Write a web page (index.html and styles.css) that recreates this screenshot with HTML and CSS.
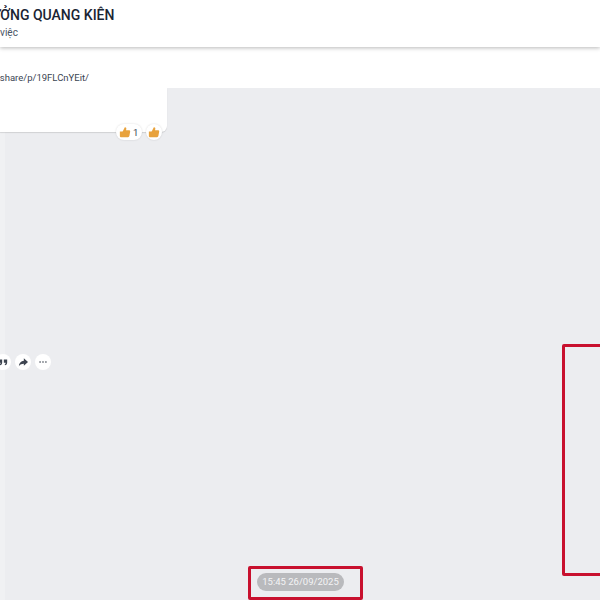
FILE: index.html
```html
<html>
    <head>
        <title>Chat</title>
        <link rel="stylesheet" href="styles.css">
    </head>
    <body>
        <div class="header">
            <div class="name">TRƯỞNG QUANG KIÊN</div>
            <div class="status">Làm việc</div>
        </div>
        <div class="linkbar">
            <div class="linktext">https://www.facebook.com/share/p/19FLCnYEit/</div>
        </div>
        <div class="chat">
            <div class="bubble">
                <div class="reacts">
                    <div class="react react1">
                        <svg class="thumb" viewBox="0 0 14 14"><path fill="#e8a23c" d="M1 6.500h2.500c.5 0 .8-.2 1.100-.6L6.800 1.500c1.300-.2 2 .8 1.700 2.100L8.200 5h3.400c1.100 0 1.700.8 1.400 1.800l-.9 5c-.2.8-.8 1.200-1.500 1.200H2c-.7 0-1-.4-1-1z"/></svg>
                        <span class="count">1</span>
                    </div>
                    <div class="react react2">
                        <svg class="thumb" viewBox="0 0 14 14"><path fill="#e8a23c" d="M1 6.500h2.500c.5 0 .8-.2 1.100-.6L6.800 1.500c1.300-.2 2 .8 1.700 2.100L8.200 5h3.400c1.100 0 1.700.8 1.400 1.800l-.9 5c-.2.8-.8 1.200-1.500 1.200H2c-.7 0-1-.4-1-1z"/></svg>
                    </div>
                </div>
            </div>
            <div class="actions">
                <div class="action action-quote">
                    <svg class="icon" viewBox="0 0 12 12"><path fill="#3d4450" d="M1 3h4v3.500C5 8.400 4 9.600 2.400 10L2 9c.8-.4 1.200-1 1.200-2H1zM7 3h4v3.500c0 1.900-1 3.100-2.600 3.500L8 9c.8-.4 1.200-1 1.200-2H7z"/></svg>
                </div>
                <div class="action">
                    <svg class="icon" viewBox="0 0 12 12"><path fill="#3d4450" d="M7 1.500 12 6 7 10.500V8C4.500 8 2.500 8.800 1 11c.3-3.600 2.500-6 6-6.500z"/></svg>
                </div>
                <div class="action">
                    <svg class="icon" viewBox="0 0 12 12"><circle cx="2.500" cy="6" r="1" fill="#3d4450"/><circle cx="6" cy="6" r="1" fill="#3d4450"/><circle cx="9.500" cy="6" r="1" fill="#3d4450"/></svg>
                </div>
            </div>
            <div class="time">15:45 26/09/2025</div>
            <div class="mark mark-time"></div>
            <div class="mark mark-side"></div>
        </div>
    </body>
</html>
```

FILE: styles.css
```css
html, body {
    margin: 0;
    height: 600px;
    overflow: hidden;
}
body {
    display: flex;
    flex-direction: column;
    width: 600px;
    background-color: #fff;
    font-family: Roboto, "Liberation Sans", sans-serif;
    color: #1a2433;
}
.header {
    height: 47px;
    box-sizing: border-box;
    padding-top: 5px;
    background-color: #fff;
    box-shadow: 0 1px 4px rgba(0, 0, 0, 0.28);
    position: relative;
    overflow: hidden;
}
.name {
    margin-left: -27px;
    font-size: 14px;
    font-weight: 500;
    line-height: 20px;
    white-space: nowrap;
}
.status {
    margin-left: -22px;
    margin-top: 1px;
    font-size: 10px;
    line-height: 14px;
    color: #4a5565;
    white-space: nowrap;
}
.linkbar {
    height: 41px;
    flex-shrink: 0;
    overflow: hidden;
}
.linktext {
    margin-top: 24px;
    margin-left: -119px;
    font-size: 9.500px;
    line-height: 14px;
    color: #3a4452;
    white-space: nowrap;
}
.chat {
    flex: 1;
    position: relative;
    background-color: #ecedf0;
    background-image: linear-gradient(to right, #f0f1f3 5px, transparent 5px);
    overflow: hidden;
}
.bubble {
    width: 167px;
    height: 44px;
    background-color: #fff;
    border-radius: 0 0 6px 0;
    box-shadow: 0 1px 1px rgba(0, 0, 0, 0.12);
    position: relative;
}
.reacts {
    position: absolute;
    left: 116px;
    top: 36px;
    display: flex;
    gap: 4px;
}
.react {
    height: 16px;
    box-sizing: border-box;
    display: flex;
    align-items: center;
    gap: 2px;
    background-color: #fff;
    border-radius: 8px;
    box-shadow: 0 0 2px rgba(0, 0, 0, 0.15);
}
.react1 {
    width: 26px;
    padding-left: 3px;
}
.react2 {
    width: 16px;
    padding-left: 2px;
}
.thumb {
    width: 12px;
    height: 12px;
}
.count {
    font-size: 9.500px;
    color: #3a4452;
}
.actions {
    display: flex;
    gap: 4px;
    margin-top: 222px;
    margin-left: -5px;
}
.action {
    width: 16px;
    height: 16px;
    border-radius: 50%;
    background-color: #fff;
    display: flex;
    align-items: center;
    justify-content: center;
}
.icon {
    width: 10px;
    height: 10px;
}
.time {
    position: absolute;
    left: 257px;
    top: 485px;
    height: 18px;
    width: 87px;
    box-sizing: border-box;
    text-align: center;
    border-radius: 9px;
    background-color: #b9babd;
    color: #f4f4f5;
    font-size: 9.500px;
    line-height: 18px;
}
.mark {
    position: absolute;
    box-sizing: border-box;
    border: 3px solid #c8102e;
    border-radius: 2px;
}
.mark-time {
    left: 248px;
    top: 478px;
    width: 115px;
    height: 34px;
}
.mark-side {
    left: 562px;
    top: 256px;
    width: 60px;
    height: 232px;
}
```
